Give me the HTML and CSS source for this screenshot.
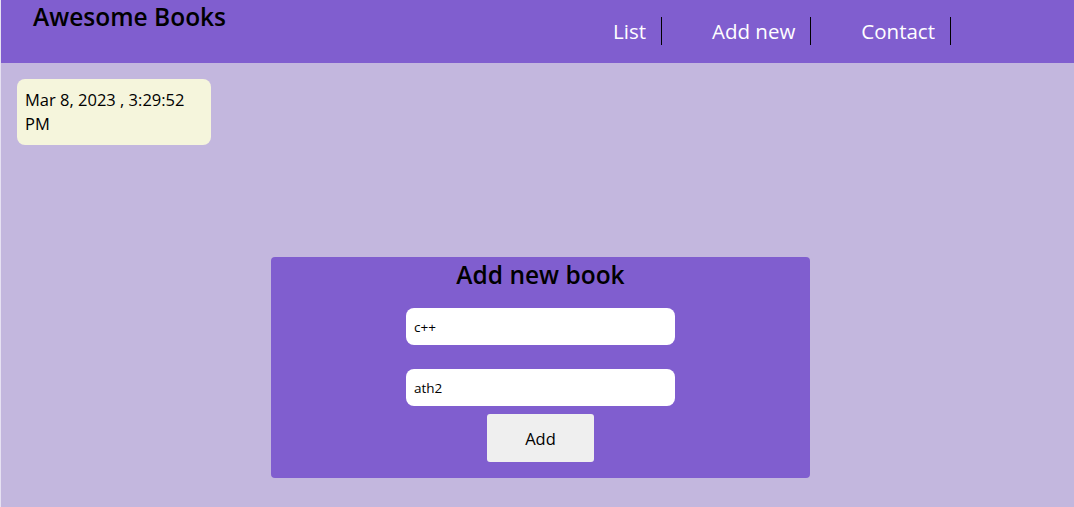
FILE: index.html
```html
<!DOCTYPE html>
<html lang="en">
<head>
<meta charset="utf-8">
<title>Awesome Books</title>
<link rel="stylesheet" href="styles.css">
</head>
<body>
<header class="topbar">
  <h1 class="brand">Awesome Books</h1>
  <nav>
    <ul class="nav-list">
      <li class="nav-item">List</li>
      <li class="nav-item">Add new</li>
      <li class="nav-item">Contact</li>
    </ul>
  </nav>
</header>
<main class="page">
  <div class="date-box">Mar 8, 2023 , 3:29:52 PM</div>
  <section class="add-card">
    <h2 class="add-title">Add new book</h2>
    <form class="add-form">
      <input class="field" type="text" value="c++">
      <input class="field" type="text" value="ath2">
      <button class="add-btn" type="button">Add</button>
    </form>
  </section>
</main>
</body>
</html>
```

FILE: styles.css
```css
* { box-sizing: border-box; }
html, body { height: 100%; }
body {
  margin: 0;
  background: #c3b7de;
  border-left: 1px solid #e6e1f2;
  font-family: "Open Sans", "Liberation Sans", sans-serif;
  color: #000;
}
.topbar {
  height: 63px;
  background: #805ecf;
  display: flex;
  justify-content: space-between;
  align-items: flex-start;
}
.brand {
  margin: 0 0 0 32px;
  font-size: 24.5px;
  font-weight: 600;
  line-height: 34px;
}
.nav-list {
  list-style: none;
  margin: 17px 123px 0 0;
  padding: 0;
  display: flex;
}
.nav-item {
  color: #fff;
  font-size: 20.5px;
  line-height: 28px;
  height: 28px;
  padding: 0 15px 0 50px;
  border-right: 1px solid #000;
}
.page {
  padding: 16px 0 0 16px;
}
.date-box {
  width: 194px;
  background: #f5f5dc;
  border-radius: 8px;
  padding: 9px 8px 9px 8px;
  font-size: 16.5px;
  line-height: 24px;
}
.add-card {
  width: 539px;
  margin: 112px 0 0 254px;
  background: #805ecf;
  border-radius: 4px;
  padding: 2px 0 16px;
  display: flex;
  flex-direction: column;
  align-items: center;
}
.add-title {
  margin: 0;
  font-size: 24.5px;
  font-weight: 600;
  line-height: 32px;
}
.add-form {
  margin-top: 17px;
  display: flex;
  flex-direction: column;
  align-items: center;
}
.field {
  width: 269px;
  height: 37px;
  border: none;
  border-radius: 8px;
  background: #fff;
  padding: 0 8px;
  font-family: inherit;
  font-size: 13.5px;
  color: #000;
  margin-bottom: 24px;
}
.field + .field { margin-bottom: 8px; }
.add-btn {
  width: 107px;
  height: 48px;
  border: none;
  border-radius: 3px;
  background: #efefef;
  font-family: inherit;
  font-size: 16.5px;
  color: #000;
}
```
